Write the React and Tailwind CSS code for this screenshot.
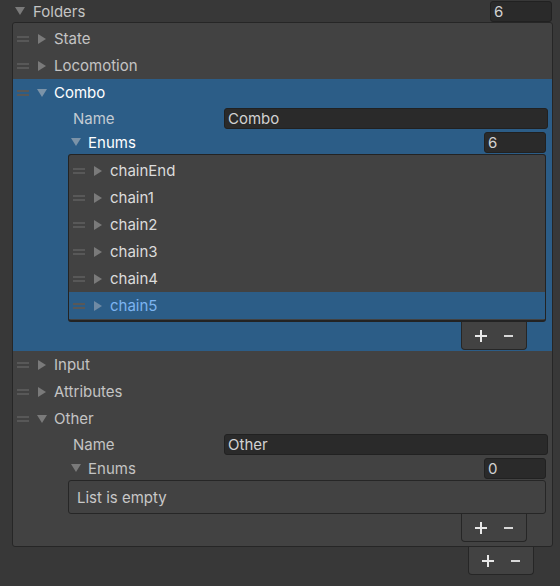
import React from "react";

const Handle = ({ className = "" }) => (
  <div className={"flex flex-col gap-[2px] w-[12px] " + className}>
    <div className="h-[2px] bg-[#585858]" />
    <div className="h-[2px] bg-[#585858]" />
  </div>
);

const TriRight = ({ color = "#7a7a7a" }) => (
  <svg width="8" height="10" viewBox="0 0 8 10">
    <polygon points="0,0 8,5 0,10" fill={color} />
  </svg>
);

const TriDown = ({ color = "#7a7a7a" }) => (
  <svg width="10" height="8" viewBox="0 0 10 8">
    <polygon points="0,0 10,0 5,8" fill={color} />
  </svg>
);

const PlusMinus = ({ className = "" }) => (
  <div
    className={
      "flex items-center h-[28px] w-[66px] bg-[#424242] border border-t-0 border-[#262626] rounded-b-[4px] " +
      className
    }
  >
    <svg width="12" height="12" viewBox="0 0 12 12" className="ml-[13px]">
      <rect x="5" y="0" width="2" height="12" fill="#e8e8e8" />
      <rect x="0" y="5" width="12" height="2" fill="#e8e8e8" />
    </svg>
    <svg width="9" height="2" viewBox="0 0 9 2" className="ml-[17px]">
      <rect x="0" y="0" width="9" height="2" fill="#d8d8d8" />
    </svg>
  </div>
);

const Field = ({ value, className = "" }) => (
  <div
    className={
      "h-[21px] flex items-center px-[3px] bg-[#2a2a2a] border border-[#212121] rounded-[3px] text-[#d2d2d2] " +
      className
    }
  >
    {value}
  </div>
);

function FolderRow({ label, open = false, selected = false }) {
  return (
    <div className="flex items-center h-[27px] pl-[4px]">
      <Handle />
      <div className="w-[25px] flex justify-center">
        {open ? <TriDown color={selected ? "#7b93a8" : "#7a7a7a"} /> : <TriRight />}
      </div>
      <span className={selected ? "text-white" : "text-[#c4c4c4]"}>{label}</span>
    </div>
  );
}

function ChainRow({ label, selected = false }) {
  return (
    <div className={"flex items-center h-[27px] pl-[4px] " + (selected ? "bg-[#2c5d87]" : "")}>
      <Handle />
      <div className="w-[25px] flex justify-center">
        <TriRight color={selected ? "#6f8aa4" : "#7a7a7a"} />
      </div>
      <span className={selected ? "text-[#7db4f0]" : "text-[#dcdcdc]"}>{label}</span>
    </div>
  );
}

function NameRow({ value, selected }) {
  return (
    <div className="flex items-center h-[24px] pl-[60px] pr-[4px]">
      <span className={"w-[151px] " + (selected ? "text-[#c3cbd3]" : "text-[#c4c4c4]")}>Name</span>
      <Field value={value} className="flex-1" />
    </div>
  );
}

function EnumsRow({ count, selected }) {
  return (
    <div className="flex items-center h-[24px] pl-[58px] pr-[6px]">
      <TriDown color={selected ? "#7b93a8" : "#7a7a7a"} />
      <span className={"ml-[7px] " + (selected ? "text-white" : "text-[#c4c4c4]")}>Enums</span>
      <Field value={count} className="ml-auto w-[62px]" />
    </div>
  );
}

export default function App() {
  const chains = ["chainEnd", "chain1", "chain2", "chain3", "chain4"];
  return (
    <div className="w-[560px] h-[586px] bg-[#383838] text-[15px] text-[#c4c4c4] font-['Inter',sans-serif] leading-none overflow-hidden">
      <div className="flex items-center h-[22px] pl-[15px] pr-[8px]">
        <TriDown />
        <span className="ml-[8px]">Folders</span>
        <Field value="6" className="ml-auto w-[62px] h-[20px]" />
      </div>

      <div className="ml-[12px] w-[541px] bg-[#424242] border border-[#262626] rounded-[3px] pt-[2px] pb-[4px]">
        <FolderRow label="State" />
        <FolderRow label="Locomotion" />

        <div className="bg-[#2c5d87] pb-[1px]">
          <FolderRow label="Combo" open selected />
          <NameRow value="Combo" selected />
          <EnumsRow count="6" selected />
          <div className="ml-[55px] mr-[6px] bg-[#424242] border border-[#232323] border-b-2 rounded-[3px] pt-[2px] pb-[1px]">
            {chains.map((c) => (
              <ChainRow key={c} label={c} />
            ))}
            <ChainRow label="chain5" selected />
          </div>
          <div className="flex justify-end pr-[25px]">
            <PlusMinus />
          </div>
        </div>

        <FolderRow label="Input" />
        <FolderRow label="Attributes" />
        <FolderRow label="Other" open />
        <NameRow value="Other" />
        <EnumsRow count="0" />
        <div className="ml-[55px] mr-[6px] h-[34px] flex items-center pl-[8px] bg-[#424242] border border-[#262626] rounded-[3px] text-[#c8c8c8]">
          List is empty
        </div>
        <div className="flex justify-end pr-[25px]">
          <PlusMinus />
        </div>
      </div>

      <div className="flex justify-end pr-[26px]">
        <PlusMinus />
      </div>
    </div>
  );
}
